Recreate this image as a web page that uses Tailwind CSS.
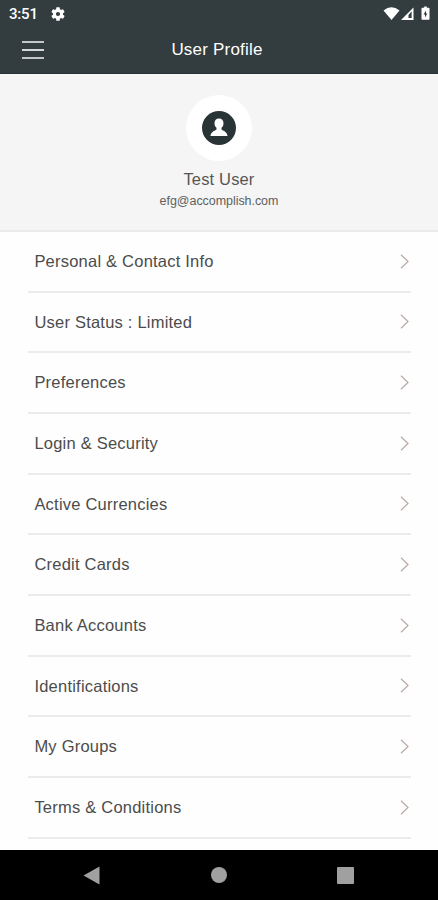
<!DOCTYPE html>
<html lang="en">
<head>
<meta charset="utf-8">
<meta name="viewport" content="width=device-width, initial-scale=1">
<title>User Profile</title>
<script src="https://cdn.jsdelivr.net/npm/@tailwindcss/browser@4"></script>
</head>
<body class="flex h-[900px] w-[438px] flex-col overflow-hidden bg-[#fefefe] font-['Liberation_Sans',Arial,sans-serif] text-[#4c4c4c]">
  <header class="h-[74px] shrink-0 border-b border-[#283134] bg-[#333d40] text-white">
    <div class="flex h-[27px] items-center pl-[9px] pr-[7px]">
      <span class="w-[42px] pt-px font-[Roboto,sans-serif] text-[15px] font-medium leading-none tracking-[-0.2px]">3:51</span>
      <svg class="size-[14px]" viewBox="2 2 20 20" fill="currentColor"><path d="M19.14 12.94c.04-.3.06-.61.06-.94s-.02-.64-.07-.94l2.03-1.58a.5.5 0 0 0 .12-.61l-1.92-3.32a.49.49 0 0 0-.59-.22l-2.39.96a7 7 0 0 0-1.62-.94l-.36-2.54a.48.48 0 0 0-.48-.41h-3.84a.48.48 0 0 0-.47.41l-.36 2.54c-.59.24-1.13.57-1.62.94l-2.39-.96a.49.49 0 0 0-.59.22L2.74 8.87a.48.48 0 0 0 .12.61l2.03 1.58a6 6 0 0 0-.02 1.88l-2.03 1.58a.5.5 0 0 0-.12.61l1.92 3.32c.12.22.37.29.59.22l2.39-.96c.5.38 1.03.7 1.62.94l.36 2.54c.05.24.24.41.48.41h3.84c.24 0 .44-.17.47-.41l.36-2.54a7 7 0 0 0 1.62-.94l2.39.96c.22.08.47 0 .59-.22l1.92-3.32a.48.48 0 0 0-.12-.61zM12 15a3 3 0 1 1 0-6 3 3 0 0 1 0 6z"/></svg>
      <svg class="ml-auto h-[16px] w-[48px]" viewBox="0 0 48 16">
        <path d="M.5 4.600Q8.500-2 16.500 4.600L8.500 14Z" fill="#fff"/>
        <path d="M30.500 1.500V14H18Z" fill="#fff"/><path d="M28.600 5.500V12H25.500V9Z" fill="#333d40"/>
        <path d="M41.200 1.800H39.200Q38.500 1.800 38.500 2.500V13.100Q38.500 13.800 39.200 13.800H45.800Q46.500 13.800 46.500 13.100V2.500Q46.500 1.800 45.800 1.800H43.800V.5H41.200Z" fill="#fff"/><path d="M43 4.500L40.500 8.500H42V11.500L44.400 7.400H43Z" fill="#333d40"/>
      </svg>
    </div>
    <div class="grid h-[46px] grid-cols-[1fr_auto_1fr] items-center pl-[22px] pr-[26px]">
      <div class="flex w-[22px] flex-col gap-[6px]">
        <i class="h-[2px] bg-[#c2c6c7]"></i><i class="h-[2px] bg-[#d5d8d9]"></i><i class="h-[2px] bg-[#c2c6c7]"></i>
      </div>
      <h1 class="pb-[2px] text-[17px] leading-none tracking-[0.2px]">User Profile</h1>
    </div>
  </header>
  <section class="flex h-[158px] shrink-0 flex-col items-center border-b-2 border-[#eaeaea] bg-[#f5f5f5] pt-[21px]">
    <div class="flex size-[66px] items-center justify-center rounded-full bg-white">
      <svg class="size-[34px]" viewBox="0 0 34 34"><circle cx="17" cy="17" r="17" fill="#293437"/><path d="M17 7.500c2.800 0 4.500 2 4.500 4.800 0 2-.8 3.600-2 4.500v1.700c.4 1 6 1.800 6 6.500H8.500c0-4.700 5.600-5.500 6-6.500v-1.700c-1.200-.9-2-2.500-2-4.500 0-2.800 1.700-4.800 4.500-4.800Z" fill="#fff"/></svg>
    </div>
    <p class="mt-[9px] text-[16.5px] leading-[18px] tracking-[0.15px] text-[#555]">Test User</p>
    <p class="mt-[6px] text-[12.5px] leading-[14px] tracking-[-0.05px] text-[#606060]">efg@accomplish.com</p>
  </section>
  <main class="h-[618px] shrink-0 overflow-hidden">
    <ul class="ml-[28px] w-[383px] text-[16.5px] tracking-[0.22px]">
      <li class="flex h-[60.67px] items-center justify-between border-b-2 border-[#ebebeb] pl-[6.4px] pr-px"><span>Personal &amp; Contact Info</span><svg class="h-[15px] w-[10px]" viewBox="0 0 10 15" fill="none" stroke="#b9aaa4" stroke-width="1.2"><path d="M1 .8 8 7.500 1 14.200"/></svg></li>
      <li class="flex h-[60.67px] items-center justify-between border-b-2 border-[#ebebeb] pl-[6.4px] pr-px"><span>User Status : Limited</span><svg class="h-[15px] w-[10px]" viewBox="0 0 10 15" fill="none" stroke="#b9aaa4" stroke-width="1.2"><path d="M1 .8 8 7.500 1 14.200"/></svg></li>
      <li class="flex h-[60.67px] items-center justify-between border-b-2 border-[#ebebeb] pl-[6.4px] pr-px"><span>Preferences</span><svg class="h-[15px] w-[10px]" viewBox="0 0 10 15" fill="none" stroke="#b9aaa4" stroke-width="1.2"><path d="M1 .8 8 7.500 1 14.200"/></svg></li>
      <li class="flex h-[60.67px] items-center justify-between border-b-2 border-[#ebebeb] pl-[6.4px] pr-px"><span>Login &amp; Security</span><svg class="h-[15px] w-[10px]" viewBox="0 0 10 15" fill="none" stroke="#b9aaa4" stroke-width="1.2"><path d="M1 .8 8 7.500 1 14.200"/></svg></li>
      <li class="flex h-[60.67px] items-center justify-between border-b-2 border-[#ebebeb] pl-[6.4px] pr-px"><span>Active Currencies</span><svg class="h-[15px] w-[10px]" viewBox="0 0 10 15" fill="none" stroke="#b9aaa4" stroke-width="1.2"><path d="M1 .8 8 7.500 1 14.200"/></svg></li>
      <li class="flex h-[60.67px] items-center justify-between border-b-2 border-[#ebebeb] pl-[6.4px] pr-px"><span>Credit Cards</span><svg class="h-[15px] w-[10px]" viewBox="0 0 10 15" fill="none" stroke="#b9aaa4" stroke-width="1.2"><path d="M1 .8 8 7.500 1 14.200"/></svg></li>
      <li class="flex h-[60.67px] items-center justify-between border-b-2 border-[#ebebeb] pl-[6.4px] pr-px"><span>Bank Accounts</span><svg class="h-[15px] w-[10px]" viewBox="0 0 10 15" fill="none" stroke="#b9aaa4" stroke-width="1.2"><path d="M1 .8 8 7.500 1 14.200"/></svg></li>
      <li class="flex h-[60.67px] items-center justify-between border-b-2 border-[#ebebeb] pl-[6.4px] pr-px"><span>Identifications</span><svg class="h-[15px] w-[10px]" viewBox="0 0 10 15" fill="none" stroke="#b9aaa4" stroke-width="1.2"><path d="M1 .8 8 7.500 1 14.200"/></svg></li>
      <li class="flex h-[60.67px] items-center justify-between border-b-2 border-[#ebebeb] pl-[6.4px] pr-px"><span>My Groups</span><svg class="h-[15px] w-[10px]" viewBox="0 0 10 15" fill="none" stroke="#b9aaa4" stroke-width="1.2"><path d="M1 .8 8 7.500 1 14.200"/></svg></li>
      <li class="flex h-[60.67px] items-center justify-between border-b-2 border-[#ebebeb] pl-[6.4px] pr-px"><span>Terms &amp; Conditions</span><svg class="h-[15px] w-[10px]" viewBox="0 0 10 15" fill="none" stroke="#b9aaa4" stroke-width="1.2"><path d="M1 .8 8 7.500 1 14.200"/></svg></li>
    </ul>
  </main>
  <nav class="flex h-[50px] shrink-0 items-center justify-between bg-black pl-[83px] pr-[84px]">
    <svg class="h-[19px] w-[17px]" viewBox="0 0 17 19"><path d="M.5 9.500 16.500.5V18.500Z" fill="#a0a0a0"/></svg>
    <i class="size-[16px] rounded-full bg-[#a0a0a0]"></i>
    <i class="size-[17px] rounded-[1px] bg-[#a0a0a0]"></i>
  </nav>
</body>
</html>
